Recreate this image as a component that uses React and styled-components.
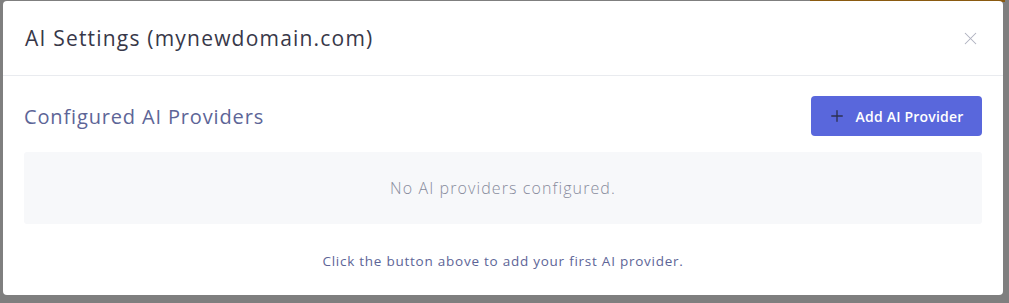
import React from 'react';
import styled, { createGlobalStyle } from 'styled-components';
import { Plus, X } from 'lucide-react';

const GlobalStyle = createGlobalStyle`
    html, body {
        margin: 0;
        padding: 0;
        background-color: #7f7f7f;
        font-family: "Open Sans", "Liberation Sans", sans-serif;
    }
`

const Backdrop = styled.div`
    width: 1009px;
    height: 303px;
    background-color: #7f7f7f;
    padding: 1px 6px 0 3px;
    box-sizing: border-box;
    position: relative;
    overflow: hidden;
`

const TopStrip = styled.div`
    position: absolute;
    top: 0;
    left: 810px;
    width: 195px;
    height: 2px;
    background-color: #8a5a10;
`

const Modal = styled.div`
    position: relative;
    width: 1000px;
    height: 294px;
    background-color: #ffffff;
    border-radius: 4px;
    display: flex;
    flex-direction: column;
`

const Header = styled.div`
    height: 74px;
    border-bottom: 1px solid #e9ebef;
    display: flex;
    align-items: center;
    justify-content: space-between;
    padding: 0 22px 0 22px;
`

const Title = styled.h2`
    margin: 0;
    font-size: 21px;
    font-weight: 500;
    color: #383849;
    letter-spacing: 1.2px;
`

const CloseButton = styled.button`
    border: none;
    background: none;
    padding: 0;
    display: flex;
    color: #aeb1bf;
    cursor: pointer;
`

const Body = styled.div`
    padding: 20px 21px 0 21px;
    display: flex;
    flex-direction: column;
`

const SectionRow = styled.div`
    display: flex;
    align-items: center;
    justify-content: space-between;
    height: 40px;
`

const SectionTitle = styled.h3`
    margin: 0;
    font-size: 20px;
    font-weight: 500;
    color: #5d6597;
    letter-spacing: 0.85px;
`

const AddButton = styled.button`
    height: 40px;
    width: 171px;
    background-color: #5967dc;
    border: none;
    border-radius: 4px;
    color: #ffffff;
    font-family: inherit;
    font-size: 14px;
    font-weight: 600;
    letter-spacing: 0.2px;
    display: flex;
    align-items: center;
    justify-content: center;
    gap: 10px;
    padding: 0 10px 0 8px;
    cursor: pointer;

    svg {
        color: #2c3050;
    }
`

const EmptyBox = styled.div`
    margin-top: 16px;
    height: 72px;
    background-color: #f7f8fa;
    border-radius: 3px;
    display: flex;
    align-items: center;
    justify-content: center;
    font-size: 16px;
    font-weight: 300;
    letter-spacing: 1.1px;
    color: #878b9c;
`

const Hint = styled.p`
    margin: 28px 0 0 0;
    text-align: center;
    font-size: 13.5px;
    letter-spacing: 0.75px;
    color: #5d6597;
`

export default function App() {
    return (
        <>
            <GlobalStyle />
            <Backdrop>
                <TopStrip />
                <Modal>
                    <Header>
                        <Title>AI Settings (mynewdomain.com)</Title>
                        <CloseButton aria-label="Close">
                            <X size={21} strokeWidth={1.2} />
                        </CloseButton>
                    </Header>
                    <Body>
                        <SectionRow>
                            <SectionTitle>Configured AI Providers</SectionTitle>
                            <AddButton>
                                <Plus size={18} strokeWidth={1.8} />
                                Add AI Provider
                            </AddButton>
                        </SectionRow>
                        <EmptyBox>No AI providers configured.</EmptyBox>
                        <Hint>Click the button above to add your first AI provider.</Hint>
                    </Body>
                </Modal>
            </Backdrop>
        </>
    )
}
